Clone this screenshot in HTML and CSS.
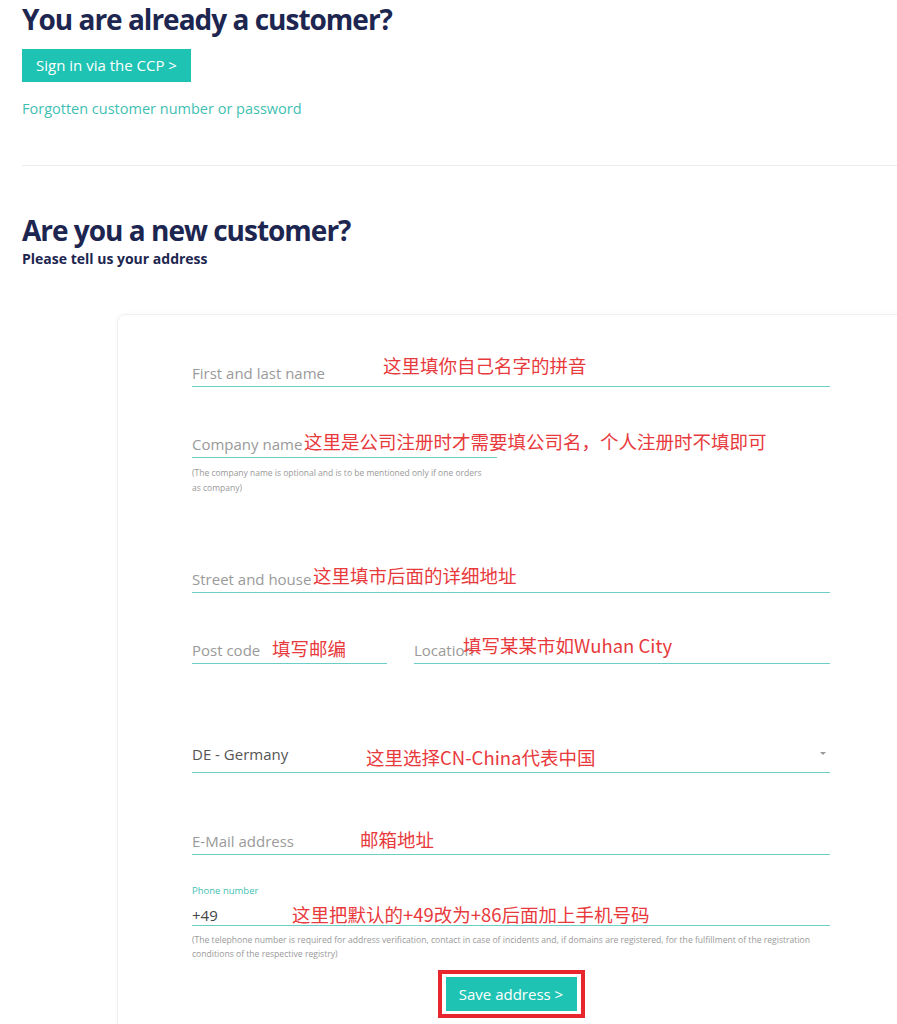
FILE: index.html
```html
<!DOCTYPE html>
<html lang="en">

<head>
    <meta charset="UTF-8">
    <meta name="viewport" content="width=device-width, initial-scale=1.0">
    <title>Customer Address</title>
    <link rel="stylesheet" href="styles.css">
</head>

<body>

    <section class="login">
        <h1>You are already a customer?</h1>
        <a class="btn" href="#">Sign in via the CCP &gt;</a>
        <a class="forgot" href="#">Forgotten customer number or password</a>
    </section>

    <hr class="divider">

    <section class="register">
        <h2>Are you a new customer?</h2>
        <p class="subtitle">Please tell us your address</p>

        <div class="card">
            <form class="address-form">
                <div class="field">
                    <input type="text" placeholder="First and last name">
                    <span class="note note-name">这里填你自己名字的拼音</span>
                </div>

                <div class="field field-company">
                    <input type="text" placeholder="Company name">
                    <span class="note note-company">这里是公司注册时才需要填公司名，个人注册时不填即可</span>
                </div>
                <p class="help help-company">(The company name is optional and is to be mentioned only if one orders as company)</p>

                <div class="field field-street">
                    <input type="text" placeholder="Street and house">
                    <span class="note note-street">这里填市后面的详细地址</span>
                </div>

                <div class="row">
                    <div class="field field-post">
                        <input type="text" placeholder="Post code">
                        <span class="note note-post">填写邮编</span>
                    </div>
                    <div class="field field-city">
                        <input type="text" placeholder="Location">
                        <span class="note note-city">填写某某市如Wuhan City</span>
                    </div>
                </div>

                <div class="field field-country">
                    <select>
                        <option>DE - Germany</option>
                        <option>CN - China</option>
                    </select>
                    <span class="note note-country">这里选择CN-China代表中国</span>
                </div>

                <div class="field field-email">
                    <input type="text" placeholder="E-Mail address">
                    <span class="note note-email">邮箱地址</span>
                </div>

                <label class="phone-label" for="phone">Phone number</label>
                <div class="field field-phone">
                    <input type="text" id="phone" value="+49">
                    <span class="note note-phone">这里把默认的+49改为+86后面加上手机号码</span>
                </div>
                <p class="help help-phone">(The telephone number is required for address verification, contact in case of incidents and, if domains are registered, for the fulfillment of the registration conditions of the respective registry)</p>

                <div class="actions">
                    <span class="highlight">
                        <button type="submit" class="btn btn-save">Save address &gt;</button>
                    </span>
                </div>
            </form>
        </div>
    </section>

</body>

</html>
```

FILE: styles.css
```css
* {
    box-sizing: border-box;
}

body {
    margin: 0;
    background-color: #fff;
    color: #1d2650;
    font-family: "Open Sans", Arial, sans-serif;
    overflow: hidden;
}

h1,
h2 {
    margin: 0;
    font-size: 28px;
    line-height: 38px;
    font-weight: 700;
    letter-spacing: -1px;
    color: #1d2650;
}

.login {
    padding-left: 22px;
}

.btn {
    display: inline-block;
    height: 33px;
    line-height: 33px;
    padding: 0 14px;
    margin-top: 11px;
    background-color: #1fc3b4;
    color: #fff;
    font-family: inherit;
    font-size: 15px;
    text-decoration: none;
    border: none;
    cursor: pointer;
}

.forgot {
    display: block;
    margin-top: 17px;
    font-size: 14.5px;
    line-height: 20px;
    color: #3fbfb3;
    text-decoration: none;
}

.divider {
    border: none;
    border-top: 1px solid #ececec;
    margin: 46px 0 0 22px;
}

.register {
    padding-left: 22px;
    margin-top: 45px;
}

.subtitle {
    margin: 1px 0 0;
    font-size: 14px;
    line-height: 18px;
    font-weight: 700;
}

.card {
    width: 900px;
    margin: 46px 0 0 95px;
    padding: 44px 0 60px 74px;
    border: 1px solid #efefef;
    border-radius: 8px;
    box-shadow: 0 0 6px rgba(0, 0, 0, 0.03);
}

.address-form {
    width: 638px;
}

/* Form fields */
.field {
    position: relative;
}

.field input,
.field select {
    display: block;
    width: 100%;
    height: 28px;
    padding: 0;
    border: none;
    border-bottom: 1px solid #6ccfc7;
    background: transparent;
    font-family: inherit;
    font-size: 15px;
    color: #444;
    outline: none;
}

.field input::placeholder {
    color: #9a9a9a;
}

.field-company {
    width: 305px;
    margin-top: 43px;
}

.field-street {
    margin-top: 70px;
}

.row {
    display: flex;
    gap: 27px;
    margin-top: 43px;
}

.field-post {
    width: 195px;
}

.field-city {
    flex: 1;
}

.field-country {
    margin-top: 77px;
}

.field select {
    height: 32px;
    padding-bottom: 5px;
    appearance: none;
    -webkit-appearance: none;
    color: #555;
}

.field-country::after {
    content: "";
    position: absolute;
    right: 4px;
    top: 11px;
    border-left: 3px solid transparent;
    border-right: 3px solid transparent;
    border-top: 3px solid #999;
}

.field-email {
    margin-top: 54px;
}

.phone-label {
    display: block;
    margin-top: 29px;
    font-size: 9.5px;
    line-height: 14px;
    color: #3fbfb3;
}

.field-phone {
    margin-top: 6px;
}

.field-phone input {
    height: 22px;
}

.help {
    margin: 7px 0 0;
    font-size: 8.5px;
    line-height: 15px;
    color: #999;
}

.help-company {
    width: 298px;
}

.help-phone {
    font-size: 8.6px;
    line-height: 14px;
}

/* Red annotations on top of the form */
.note {
    position: absolute;
    white-space: nowrap;
    font-family: "Noto Sans CJK SC", sans-serif;
    font-size: 18.5px;
    line-height: 22px;
    color: #e8393c;
}

.note-name {
    left: 191px;
    top: -5px;
}

.note-company {
    left: 112px;
    top: 0;
}

.note-street {
    left: 121px;
    top: -1px;
}

.note-post {
    left: 80px;
    top: 1px;
}

.note-city {
    left: 49px;
    top: -2px;
}

.note-country {
    left: 174px;
    top: 5px;
}

.note-email {
    left: 168px;
    top: 1px;
}

.note-phone {
    left: 100px;
    top: -1px;
}

.actions {
    display: flex;
    justify-content: center;
    margin-top: 9px;
}

.highlight {
    display: inline-block;
    padding: 3px 4px;
    border: 4px solid #e8262d;
}

.btn-save {
    display: block;
    width: 131px;
    height: 34px;
    line-height: 34px;
    padding: 0;
    margin: 0;
}
```
